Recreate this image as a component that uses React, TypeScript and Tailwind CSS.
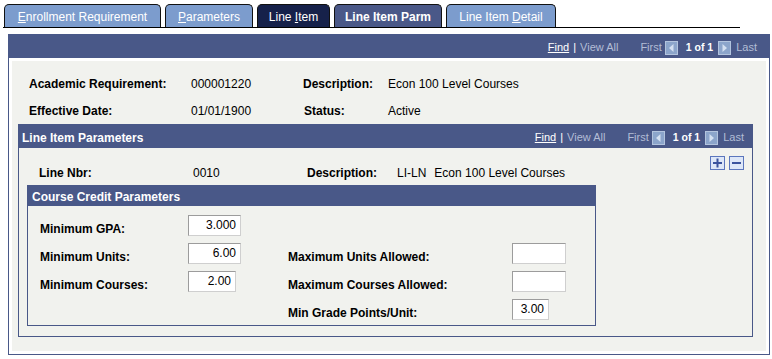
import React from "react";

function NavArrow({ dir }: { dir: "left" | "right" }) {
  return (
    <svg width="13" height="14" viewBox="0 0 13 14" className="shrink-0">
      <rect x="0.5" y="0.5" width="12" height="13" fill="#8ca5cb" stroke="#b3c4de" />
      {dir === "left" ? (
        <path d="M8.5 3 L4 7 L8.5 11 Z" fill="#d4e0f1" />
      ) : (
        <path d="M4.5 3 L9 7 L4.5 11 Z" fill="#d4e0f1" />
      )}
    </svg>
  );
}

function NavBar() {
  return (
    <div className="flex items-center text-[11px] leading-none">
      <span className="text-white underline">Find</span>
      <span className="text-white mx-[4px]">|</span>
      <span className="text-[#b3bdd6]">View All</span>
      <span className="text-[#b3bdd6] ml-[22px]">First</span>
      <span className="ml-[3px]">
        <NavArrow dir="left" />
      </span>
      <span className="ml-[8px] font-bold text-white text-[10.5px]">1 of 1</span>
      <span className="ml-[5px]">
        <NavArrow dir="right" />
      </span>
      <span className="text-[#b3bdd6] ml-[5px]">Last</span>
    </div>
  );
}

function Tab({
  children,
  w,
  bg,
  bold,
}: {
  children: React.ReactNode;
  w: string;
  bg: string;
  bold?: boolean;
}) {
  return (
    <div
      className={`${w} ${bg} h-[23px] border border-b-0 border-[#111] rounded-t-[5px] flex items-center justify-center text-white text-[12px] ${
        bold ? "font-bold" : ""
      }`}
    >
      <span className="pt-[1px]">{children}</span>
    </div>
  );
}

function Field({ w, value }: { w: string; value?: string }) {
  return (
    <div
      className={`${w} h-[21px] bg-white border border-t-[#9c9c9c] border-l-[#9c9c9c] border-r-[#cfcfcf] border-b-[#cfcfcf] text-right pr-[4px] text-[12px] leading-[19px] text-black`}
    >
      {value}
    </div>
  );
}

function IconBtn({ kind }: { kind: "plus" | "minus" }) {
  return (
    <div className="w-[15px] h-[14px] bg-[#dde7f8] border border-[#5b76bd] flex items-center justify-center">
      <svg width="11" height="10" viewBox="0 0 11 10">
        <rect x="1" y="4" width="9" height="2" fill="#3a539e" />
        {kind === "plus" && <rect x="4.5" y="0.5" width="2" height="9" fill="#3a539e" />}
      </svg>
    </div>
  );
}

export default function App() {
  return (
    <div
      className="w-[772px] h-[359px] bg-white text-[12px] text-black overflow-hidden"
      style={{ fontFamily: "'Liberation Sans', Arial, sans-serif" }}
    >
      {/* tabs */}
      <div className="pt-[4px]">
        <div className="flex items-end gap-[4px] pl-[4px]">
          <Tab w="w-[157px]" bg="bg-[#7c9ccd]">
            <span className="underline">E</span>nrollment Requirement
          </Tab>
          <Tab w="w-[88px]" bg="bg-[#7c9ccd]">
            <span className="underline">P</span>arameters
          </Tab>
          <Tab w="w-[73px]" bg="bg-[#16214a]">
            Line <span className="underline">I</span>tem
          </Tab>
          <Tab w="w-[108px]" bg="bg-[#4a5888]" bold>
            Line Item Parm
          </Tab>
          <Tab w="w-[110px]" bg="bg-[#7c9ccd]">
            Line Item <span className="underline">D</span>etail
          </Tab>
        </div>
        <div className="h-px bg-black w-[737px] ml-[3px]" />
      </div>

      {/* main panel */}
      <div className="mt-[6px] ml-[8px] w-[762px] h-[321px] border border-[#495888] flex flex-col">
        <div className="h-[23px] bg-[#495888] flex items-center justify-end pr-[12px] pt-[2px]">
          <NavBar />
        </div>
        <div className="flex-1 p-[3px] bg-white">
          <div className="h-full bg-[#f1f2ee]">
            <div className="pt-[9px] pl-[17px]">
              <div className="flex items-center h-[27px]">
                <span className="w-[162px] font-bold">Academic Requirement:</span>
                <span className="w-[112px]">000001220</span>
                <span className="w-[85px] font-bold">Description:</span>
                <span>Econ 100 Level Courses</span>
              </div>
              <div className="flex items-center h-[27px]">
                <span className="w-[162px] font-bold">Effective Date:</span>
                <span className="w-[113px]">01/01/1900</span>
                <span className="w-[84px] font-bold">Status:</span>
                <span>Active</span>
              </div>
            </div>

            {/* line item parameters */}
            <div className="ml-[6px] w-[735px] h-[213px] border border-[#495888] flex flex-col">
              <div className="h-[23px] bg-[#495888] flex items-center justify-between pl-[3px] pr-[8px] pt-[2px]">
                <span className="text-white font-bold">Line Item Parameters</span>
                <NavBar />
              </div>
              <div className="flex-1 flex">
                <div className="flex-1">
                  <div className="h-[24px] mt-[13px] flex items-center pl-[20px]">
                    <span className="w-[154px] font-bold">Line Nbr:</span>
                    <span className="w-[114px]">0010</span>
                    <span className="w-[90px] font-bold">Description:</span>
                    <span>LI-LN</span>
                    <span className="ml-[8px]">Econ 100 Level Courses</span>
                  </div>

                  {/* course credit parameters */}
                  <div className="ml-[8px] w-[569px] h-[141px] border border-[#495888]">
                    <div className="h-[20px] bg-[#495888] flex items-center pl-[4px] pt-[1px]">
                      <span className="text-white font-bold">Course Credit Parameters</span>
                    </div>
                    <div className="pt-[5px] pl-[12px]">
                      <div className="h-[28px] flex items-center">
                        <span className="w-[148px] font-bold mt-[7px]">Minimum GPA:</span>
                        <Field w="w-[53px]" value="3.000" />
                      </div>
                      <div className="h-[28px] flex items-center">
                        <span className="w-[148px] font-bold mt-[7px]">Minimum Units:</span>
                        <div className="w-[100px]">
                          <Field w="w-[53px]" value="6.00" />
                        </div>
                        <span className="w-[224px] font-bold mt-[7px]">Maximum Units Allowed:</span>
                        <Field w="w-[54px]" />
                      </div>
                      <div className="h-[28px] flex items-center">
                        <span className="w-[148px] font-bold mt-[7px]">Minimum Courses:</span>
                        <div className="w-[100px]">
                          <Field w="w-[48px]" value="2.00" />
                        </div>
                        <span className="w-[224px] font-bold mt-[7px]">Maximum Courses Allowed:</span>
                        <Field w="w-[54px]" />
                      </div>
                      <div className="h-[28px] flex items-center">
                        <span className="w-[248px]" />
                        <span className="w-[224px] font-bold mt-[7px]">Min Grade Points/Unit:</span>
                        <Field w="w-[37px]" value="3.00" />
                      </div>
                    </div>
                  </div>
                </div>
                <div className="flex gap-[4px] mt-[8px] pr-[8px]">
                  <IconBtn kind="plus" />
                  <IconBtn kind="minus" />
                </div>
              </div>
            </div>
          </div>
        </div>
      </div>
    </div>
  );
}
